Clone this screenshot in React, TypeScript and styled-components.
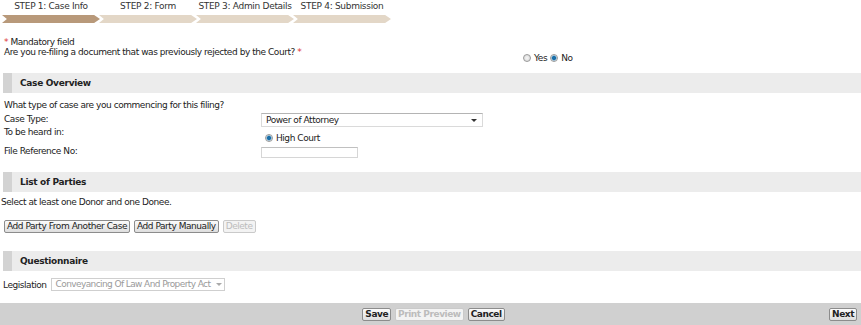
import styled, { createGlobalStyle } from "styled-components";

const GlobalStyle = createGlobalStyle`
  html, body { margin: 0; padding: 0; background: #fff; }
  body {
    font-family: "DejaVu Sans", Verdana, sans-serif;
    font-size: 9px;
    letter-spacing: -0.45px;
    color: #222;
  }
`;

const steps = ["STEP 1: Case Info", "STEP 2: Form", "STEP 3: Admin Details", "STEP 4: Submission"];

const Page = styled.div`
  width: 861px;
  height: 325px;
  display: flex;
  flex-direction: column;
  overflow: hidden;
`;

const StepBar = styled.div`
  display: flex;
  padding-left: 2px;
`;

const Step = styled.div`
  width: 98px;
  display: flex;
  flex-direction: column;
  align-items: center;
  gap: 3px;
  margin-right: -1px;
`;

const StepLabel = styled.span`
  color: #333;
  line-height: 12px;
  white-space: nowrap;
  letter-spacing: -0.3px;
`;

const Chevron = styled.div<{ $active?: boolean }>`
  width: 98px;
  height: 8px;
  background: ${(p) => (p.$active ? "#b8997a" : "#e3d7c7")};
  clip-path: polygon(0 0, 94% 0, 100% 50%, 94% 100%, 0 100%, 5% 50%);
`;

const Intro = styled.div`
  padding: 14px 4px 0 4px;
  display: flex;
  flex-direction: column;
  line-height: 10px;
`;

const Req = styled.span`
  color: #d33;
`;

const QuestionRow = styled.div`
  display: flex;
  align-items: flex-start;
`;

const Question = styled.span`
  width: 519px;
`;

const RadioGroup = styled.label`
  display: flex;
  align-items: center;
  gap: 3px;
  margin-top: 6px;
`;

const Radio = styled.span<{ $checked?: boolean }>`
  width: 8px;
  height: 8px;
  border-radius: 50%;
  border: 1px solid #9a9a9a;
  box-sizing: border-box;
  background: ${(p) =>
    p.$checked
      ? "radial-gradient(circle, #1a6fa8 0 1.6px, #6fa9d0 2.2px, #dde8ef 3px)"
      : "radial-gradient(circle, #f6f6f6, #d4d4d4)"};
  display: inline-block;
  flex: none;
`;

const SectionHeader = styled.div<{ $top: number }>`
  margin: ${(p) => p.$top}px 0 0 3px;
  height: 20px;
  background: #ececec;
  display: flex;
  align-items: center;
  font-weight: bold;
  letter-spacing: -0.3px;
  color: #222;
  &::before {
    content: "";
    width: 9px;
    height: 20px;
    background: #d3d3d3;
    margin-right: 8px;
  }
`;

const FormBlock = styled.div`
  padding: 6px 4px 0 4px;
  display: grid;
  grid-template-columns: 257px 1fr;
  grid-template-rows: 12px 15px 19px 15px;
  line-height: 12px;
`;

const FullRow = styled.div`
  grid-column: 1 / span 2;
`;

const Label = styled.div<{ $lh?: number }>`
  line-height: ${(p) => p.$lh ?? 12}px;
`;

const Field = styled.div<{ $top: number }>`
  padding-top: ${(p) => p.$top}px;
  display: flex;
  align-items: flex-start;
`;

const Select = styled.div<{ $w: number; $disabled?: boolean }>`
  width: ${(p) => p.$w}px;
  height: ${(p) => (p.$disabled ? 13 : 14)}px;
  box-sizing: border-box;
  border: 1px solid ${(p) => (p.$disabled ? "#cfcfcf" : "#dadada")};
  border-top-color: ${(p) => (p.$disabled ? "#cfcfcf" : "#b4b4b4")};
  background: #fff;
  display: flex;
  align-items: center;
  justify-content: space-between;
  padding: 0 5px 0 4px;
  line-height: 11px;
  color: ${(p) => (p.$disabled ? "#9a9a9a" : "#222")};
  white-space: nowrap;
  letter-spacing: ${(p) => (p.$disabled ? "-0.6px" : "-0.45px")};
  &::after {
    content: "";
    margin-left: 6px;
    border-left: 3px solid transparent;
    border-right: 3px solid transparent;
    border-top: 3px solid ${(p) => (p.$disabled ? "#aaa" : "#333")};
  }
`;

const TextInput = styled.div`
  width: 97px;
  height: 11px;
  box-sizing: border-box;
  border: 1px solid #d6d6d6;
  border-top-color: #c0c0c0;
`;

const RadioLabel = styled.span`
  display: flex;
  align-items: center;
  gap: 3px;
  padding-left: 4px;
`;

const Note = styled.div`
  padding: 4px 1px 0;
  line-height: 12px;
`;

const ButtonRow = styled.div`
  display: flex;
  gap: 4px;
  padding: 12px 4px 0;
`;

const Button = styled.button<{ $disabled?: boolean; $bold?: boolean }>`
  font-family: inherit;
  font-size: 9px;
  letter-spacing: -0.45px;
  font-weight: ${(p) => (p.$bold ? "bold" : "normal")};
  height: 13px;
  padding: 0 2px;
  margin: 0;
  line-height: 11px;
  border: 1px solid ${(p) => (p.$disabled ? "#cacaca" : "#8c8c8c")};
  border-radius: 2px;
  background: ${(p) => (p.$disabled ? "#f3f3f3" : "linear-gradient(#fbfbfb, #dedede)")};
  color: ${(p) => (p.$disabled ? "#bcbcbc" : "#222")};
  white-space: nowrap;
`;

const LegRow = styled.div`
  display: flex;
  align-items: center;
  gap: 4px;
  padding: 7px 3px 0;
`;

const Footer = styled.div`
  margin-top: auto;
  height: 22px;
  background: #d0d0d0;
  display: grid;
  grid-template-columns: 1fr auto 1fr;
  align-items: center;
  padding: 0 4px;
`;

const Center = styled.div`
  grid-column: 2;
  display: flex;
  gap: 4px;
  margin-left: 6px;
`;

const Right = styled.div`
  grid-column: 3;
  justify-self: end;
`;

export default function App() {
  return (
    <Page>
      <GlobalStyle />
      <StepBar>
        {steps.map((s, i) => (
          <Step key={s}>
            <StepLabel>{s}</StepLabel>
            <Chevron $active={i === 0} />
          </Step>
        ))}
      </StepBar>

      <Intro>
        <span>
          <Req>*</Req> Mandatory field
        </span>
        <QuestionRow>
          <Question>
            Are you re-filing a document that was previously rejected by the Court? <Req>*</Req>
          </Question>
          <RadioGroup>
            <Radio /> Yes <Radio $checked /> No
          </RadioGroup>
        </QuestionRow>
      </Intro>

      <SectionHeader $top={10}>Case Overview</SectionHeader>
      <FormBlock>
        <FullRow>What type of case are you commencing for this filing?</FullRow>
        <Label $lh={16}>Case Type:</Label>
        <Field $top={2}>
          <Select $w={222}>Power of Attorney</Select>
        </Field>
        <Label>To be heard in:</Label>
        <Field $top={6}>
          <RadioLabel>
            <Radio $checked /> High Court
          </RadioLabel>
        </Field>
        <Label>File Reference No:</Label>
        <Field $top={2}>
          <TextInput />
        </Field>
      </FormBlock>

      <SectionHeader $top={12}>List of Parties</SectionHeader>
      <Note>Select at least one Donor and one Donee.</Note>
      <ButtonRow>
        <Button>Add Party From Another Case</Button>
        <Button>Add Party Manually</Button>
        <Button $disabled>Delete</Button>
      </ButtonRow>

      <SectionHeader $top={18}>Questionnaire</SectionHeader>
      <LegRow>
        Legislation
        <Select $w={174} $disabled>Conveyancing Of Law And Property Act</Select>
      </LegRow>

      <Footer>
        <Center>
          <Button $bold>Save</Button>
          <Button $bold $disabled>Print Preview</Button>
          <Button $bold>Cancel</Button>
        </Center>
        <Right>
          <Button $bold>Next</Button>
        </Right>
      </Footer>
    </Page>
  );
}
